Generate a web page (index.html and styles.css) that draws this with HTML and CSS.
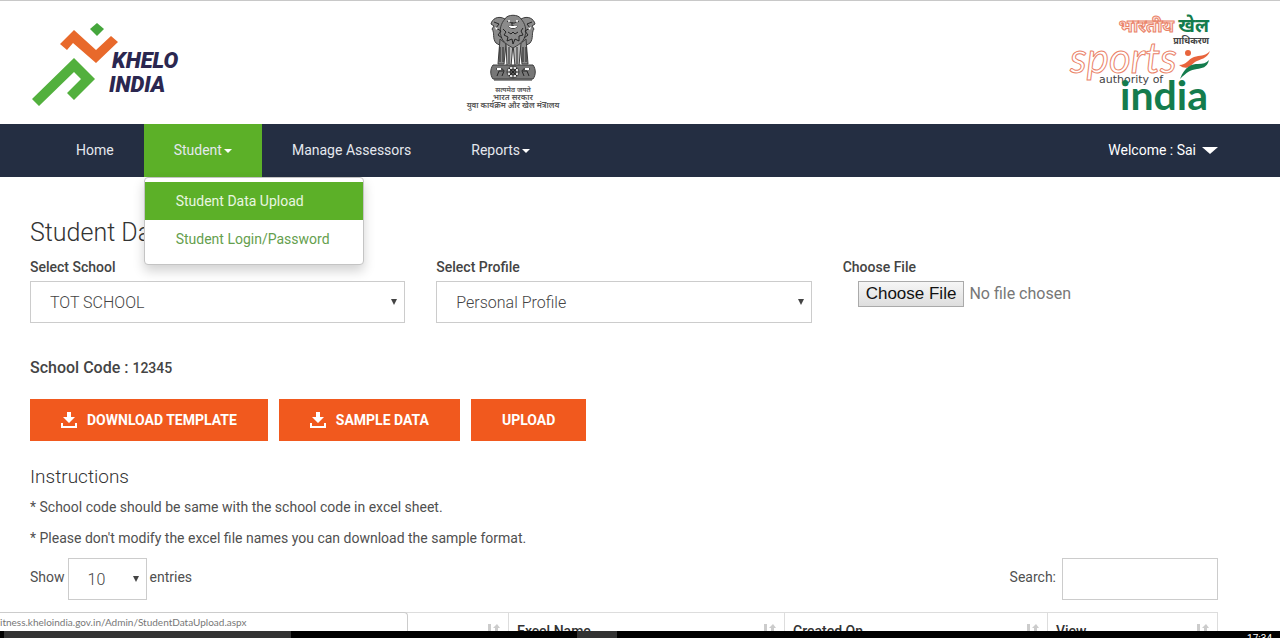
FILE: index.html
```html
<!DOCTYPE html>
<html lang="en">
<head>
  <meta charset="UTF-8">
  <meta name="viewport" content="width=device-width, initial-scale=1.0">
  <title>Student Data Upload</title>
  <link rel="stylesheet" href="styles.css">
</head>
<body>
  <div class="page">
    <header class="header">
      <svg class="logo-khelo" width="152" height="88" viewBox="0 0 152 88" role="img" aria-label="Khelo India">
        <path d="M65 1l7 6-7 7-7-7z" fill="#45a63c"/>
        <path d="M28 22l14-14 22 20 15-14 7 6-22 21-23-20-6 7z" fill="#e8692b"/>
        <path d="M42 36l21 21-21 21-7-7 14-14-7-7L7 84l-7-7z" fill="#52b03d"/>
        <text x="80" y="46" class="khelo-text">KHELO</text>
        <text x="77" y="70" class="khelo-text">INDIA</text>
      </svg>
      <svg class="logo-emblem" width="106" height="98" viewBox="-4 0 106 98" role="img" aria-label="Ministry of Youth Affairs and Sports">
        <g fill="#8b8b8b" stroke="#3c3c3c" stroke-width="1">
          <path d="M39 5c-7-4-13 0-14 5l3 2-2 3c3 4 0 9 4 14l5 3 5-9z"/>
          <path d="M55 5c7-4 13 0 14 5l-3 2 2 3c-3 4 0 9-4 14l-5 3-5-9z"/>
          <path d="M34 25l-2 25h6l2-20zM60 25l2 25h-6l-2-20z"/>
          <path d="M40 29l1 23h4l2-22 2 22h4l2-23z" fill="#b5b5b5"/>
          <path d="M39 5c2-5 14-5 16 0 4 4 6 11 4 17-2 7-7 9-12 12-5-3-10-5-12-12-2-6 0-13 4-17z"/>
          <path d="M27 51h40c3 4 3 10 0 14H27c-3-4-3-10 0-14z" fill="#777"/>
          <circle cx="47" cy="58" r="6" fill="#ddd"/>
          <circle cx="47" cy="58" r="3"/>
        </g>
        <g fill="none" stroke="#242424" stroke-width="1">
          <path d="M41 8c2-2 3 1 5 1h2c2 0 3-3 5-1M42 12c3 3 7 3 10 0M46 8v4l2 0M37 15l3 3-2 3 4 2-1 4 5-2 1 5 2-5 4 2 0-5 4-1-2-4 2-3M42 18l3 2 2-2 2 2 3-2M28 8l5 2-3 4 5 3-3 4 4 3M66 8l-5 2 3 4-5 3 3 4-4 3M34 33v15M37 33v15M43 33v17M51 33v17M57 33v15M60 33v15"/>
          <path d="M30 55c4 0 7-1 8 2l-2 5M31 62l2-5 4 0M64 55c-4 0-7-1-8 2l2 5M63 62l-2-5-4 0M28 66h38M47 52v12M41 58h12M43 54l8 8M51 54l-8 8"/>
        </g>
        <g fill="#fff">
          <circle cx="43" cy="7" r="1"/><circle cx="51" cy="7" r="1"/>
          <path d="M42 12h10l-3 2h-4zM29 13l3 1-2 2zM65 13l-3 1 2 2zM31 54h4v2h-4zM59 54h4v2h-4z"/>
        </g>
        <text x="47" y="78" class="emblem-text emblem-small">सत्यमेव जयते</text>
        <text x="47" y="86" class="emblem-text">भारत सरकार</text>
        <text x="47" y="94" class="emblem-text">युवा कार्यक्रम और खेल मंत्रालय</text>
      </svg>
      <svg class="logo-sai" width="142" height="102" viewBox="0 0 142 102" role="img" aria-label="Sports Authority of India">
        <text x="104" y="21" class="sai-hindi-outline">भारतीय</text>
        <text x="139" y="21" class="sai-hindi">खेल</text>
        <text x="139" y="33" class="sai-hindi-small">प्राधिकरण</text>
        <text x="0" y="62" class="sai-sports">sports</text>
        <text x="29" y="72" class="sai-authority">authority of</text>
        <text x="50" y="99" class="sai-india">india</text>
        <circle cx="118" cy="42" r="3" fill="#e8643c"/>
        <path d="M109 54c8 0 9-6 15-8 6-2 10 0 16-6-3 8-10 8-15 11-5 4-8 9-16 3z" fill="#e8643c"/>
        <path d="M110 68c5-13 12-15 18-15 5 0 8-1 11-4-2 8-7 8-12 9-7 1-10 3-17 10z" fill="#147c4d"/>
      </svg>
    </header>

    <nav class="navbar">
      <ul class="menu">
        <li><a href="#">Home</a></li>
        <li class="active">
          <a href="#">Student<span class="caret"></span></a>
          <ul class="dropdown">
            <li><a href="#" class="selected">Student Data Upload</a></li>
            <li><a href="#">Student Login/Password</a></li>
          </ul>
        </li>
        <li><a href="#">Manage Assessors</a></li>
        <li><a href="#">Reports<span class="caret"></span></a></li>
      </ul>
      <a href="#" class="welcome">Welcome : Sai<span class="caret caret-big"></span></a>
    </nav>

    <main class="content">
      <h1>Student Data Upload</h1>
      <form>
        <div class="fields">
          <div class="field">
            <label for="school">Select School</label>
            <select id="school" class="select">
              <option>TOT SCHOOL</option>
            </select>
          </div>
          <div class="field">
            <label for="profile">Select Profile</label>
            <select id="profile" class="select">
              <option>Personal Profile</option>
            </select>
          </div>
          <div class="field">
            <label for="file">Choose File</label>
            <input type="file" id="file" class="file">
          </div>
        </div>

        <p class="school-code">School Code : <span>12345</span></p>

        <div class="buttons">
          <button type="button" class="btn">
            <svg width="16" height="16" viewBox="0 0 16 16" fill="#fff"><path d="M6 0h4v5h4l-6 6-6-6h4zM0 11h2v3h12v-3h2v5H0z"/></svg>
            DOWNLOAD TEMPLATE
          </button>
          <button type="button" class="btn">
            <svg width="16" height="16" viewBox="0 0 16 16" fill="#fff"><path d="M6 0h4v5h4l-6 6-6-6h4zM0 11h2v3h12v-3h2v5H0z"/></svg>
            SAMPLE DATA
          </button>
          <button type="submit" class="btn">UPLOAD</button>
        </div>
      </form>

      <h2>Instructions</h2>
      <p class="note">* School code should be same with the school code in excel sheet.</p>
      <p class="note">* Please don't modify the excel file names you can download the sample format.</p>

      <div class="table-tools">
        <label class="entries">Show
          <select class="select select-small">
            <option>10</option>
          </select>
          entries
        </label>
        <label class="search">Search: <input type="search"></label>
      </div>

      <table class="uploads">
        <colgroup>
          <col>
          <col class="col-file">
          <col class="col-name">
          <col class="col-date">
          <col class="col-view">
        </colgroup>
        <thead>
          <tr>
            <th></th>
            <th><svg class="sort" width="13" height="12" viewBox="0 0 13 12"><path d="M1 0h3v8h2l-3 4-3-4h1zM8 12V4H6l4-4 3 4h-2v8z"/></svg></th>
            <th>Excel Name<svg class="sort" width="13" height="12" viewBox="0 0 13 12"><path d="M1 0h3v8h2l-3 4-3-4h1zM8 12V4H6l4-4 3 4h-2v8z"/></svg></th>
            <th>Created On<svg class="sort" width="13" height="12" viewBox="0 0 13 12"><path d="M1 0h3v8h2l-3 4-3-4h1zM8 12V4H6l4-4 3 4h-2v8z"/></svg></th>
            <th>View<svg class="sort" width="13" height="12" viewBox="0 0 13 12"><path d="M1 0h3v8h2l-3 4-3-4h1zM8 12V4H6l4-4 3 4h-2v8z"/></svg></th>
          </tr>
        </thead>
      </table>
    </main>
    <div class="status">itness.kheloindia.gov.in/Admin/StudentDataUpload.aspx</div>
  </div>

  <footer class="taskbar">
    <span class="task task-search"></span>
    <span class="task task-app"></span>
    <span class="clock">17:34</span>
  </footer>
</body>
</html>
```

FILE: styles.css
```css
* {
  box-sizing: border-box;
}
body {
  margin: 0;
  height: 100vh;
  display: flex;
  flex-direction: column;
  overflow: hidden;
  font-family: Roboto, Arial, sans-serif;
  font-size: 14px;
  color: #505050;
  background-color: #fff;
}
h1, h2, p, ul {
  margin: 0;
  padding: 0;
}
ul {
  list-style: none;
}
a {
  text-decoration: none;
}
.page {
  position: relative;
  flex: 1;
  min-height: 0;
  overflow: hidden;
}

/* header logos */
.header {
  height: 124px;
  padding: 10px 68px 0 32px;
  border-top: 1px solid #c8c8c8;
  display: grid;
  grid-template-columns: 2fr auto 3fr;
}
.logo-khelo {
  margin-top: 11px;
  overflow: visible;
}
.logo-emblem {
  margin-top: 3px;
  overflow: visible;
}
.logo-sai {
  justify-self: end;
  overflow: visible;
}
.khelo-text {
  font: italic 900 22px Roboto, sans-serif;
  fill: #2b2750;
}
.emblem-text {
  font: 600 8px "Noto Sans", sans-serif;
  text-anchor: middle;
  fill: #555;
}
.emblem-small {
  font-size: 7px;
}
.sai-hindi-outline,
.sai-hindi,
.sai-hindi-small {
  font: 700 19px "Noto Sans", sans-serif;
  text-anchor: end;
  fill: #147c4d;
}
.sai-hindi-outline {
  font-size: 18px;
  fill: #fbe3dc;
  stroke: #ea8268;
  stroke-width: 1;
}
.sai-hindi-small {
  font-size: 9px;
  fill: #444;
}
.sai-sports {
  font: italic 400 42px Lato, sans-serif;
  fill: #fff;
  stroke: #ea8268;
  stroke-width: 1;
}
.sai-authority {
  font: 400 11px "DejaVu Sans", sans-serif;
  fill: #444;
}
.sai-india {
  font: 700 41px Lato, sans-serif;
  fill: #147c4d;
}

/* navigation */
.navbar {
  display: flex;
  justify-content: space-between;
  padding: 0 62px 0 46px;
  background-color: #242e42;
  line-height: 53px;
}
.menu {
  display: flex;
}
.menu > li {
  position: relative;
}
.menu > li > a {
  display: flex;
  align-items: center;
  padding: 0 30px;
  color: #e4e8ee;
}
.menu > .active {
  background-color: #5cb028;
}
.caret {
  margin-left: 2px;
  border-top: 4px solid #fff;
  border-left: 4px solid transparent;
  border-right: 4px solid transparent;
}
.caret-big {
  margin-left: 6px;
  border-top-width: 7px;
  border-left-width: 8px;
  border-right-width: 8px;
}
.welcome {
  display: flex;
  align-items: center;
  color: #fff;
}
.dropdown {
  position: absolute;
  top: 100%;
  left: 0;
  z-index: 10;
  width: 220px;
  padding: 4px 0 6px;
  background-color: #fff;
  border: 1px solid #c4c4c4;
  border-radius: 4px;
  box-shadow: 0 6px 12px rgba(0, 0, 0, 0.18);
  line-height: 38px;
}
.dropdown a {
  display: block;
  padding: 0 31px;
  color: #65a04e;
  white-space: nowrap;
}
.dropdown .selected {
  background-color: #5cb028;
  color: #e9f6e0;
}

/* upload form */
.content {
  padding: 40px 62px 0 30px;
}
h1 {
  margin-bottom: 8px;
  font-size: 25px;
  font-weight: 300;
  line-height: 32px;
  color: #333;
}
.fields {
  display: grid;
  grid-template-columns: repeat(3, 1fr);
  gap: 31px;
}
.field label {
  display: block;
  margin-bottom: 4px;
  font-weight: 500;
  line-height: 20px;
  color: #444;
}
.select {
  display: block;
  width: 100%;
  height: 42px;
  padding: 0 19px;
  border: 1px solid #ccc;
  border-radius: 0;
  appearance: none;
  background: #fff url("data:image/svg+xml,%3Csvg xmlns='http://www.w3.org/2000/svg' width='6' height='6'%3E%3Cpath d='M0 0h6L3 6z' fill='%23444'/%3E%3C/svg%3E") no-repeat right 7px center;
  font-family: inherit;
  font-size: 16px;
  font-weight: 300;
  color: #444;
}
.file {
  width: 100%;
  padding-left: 15px;
  font-family: inherit;
  font-size: 16px;
  color: #777;
}
.file::file-selector-button {
  height: 26px;
  margin-right: 5px;
  padding: 0 7px;
  border: 1px solid #aaa;
  border-radius: 0;
  background: linear-gradient(#f6f6f6, #dedede);
  font-family: "Liberation Sans", Arial, sans-serif;
  font-size: 17px;
  font-weight: 400;
  color: #111;
}
.school-code {
  margin-top: 34px;
  font-size: 16px;
  font-weight: 500;
  line-height: 22px;
  color: #444;
}
.school-code span {
  font-size: 14px;
}
.buttons {
  display: flex;
  gap: 11px;
  margin-top: 20px;
}
.btn {
  display: flex;
  align-items: center;
  gap: 10px;
  height: 42px;
  padding: 0 31px;
  border: none;
  background-color: #f1591e;
  color: #fff;
  font-family: inherit;
  font-size: 14px;
  font-weight: 700;
  cursor: pointer;
}

/* instructions */
h2 {
  margin: 23px 0 7px;
  font-size: 19px;
  font-weight: 300;
  line-height: 26px;
  color: #333;
}
.note {
  margin-bottom: 11px;
  line-height: 20px;
}

/* uploads table */
.table-tools {
  display: flex;
  justify-content: space-between;
  margin-top: -1px;
  line-height: 38px;
}
.entries,
.search {
  display: flex;
  gap: 3px;
}
.select-small {
  width: 79px;
}
.search {
  gap: 6px;
}
.search input {
  width: 156px;
  height: 42px;
  border: 1px solid #ccc;
}
.uploads {
  width: 100%;
  margin-top: 12px;
  border-collapse: collapse;
  table-layout: fixed;
}
.uploads th {
  height: 40px;
  padding: 7px 8px;
  border: 1px solid #ddd;
  text-align: left;
  vertical-align: top;
  font-weight: 500;
  line-height: 22px;
  color: #333;
}
.col-file {
  width: 290px;
}
.col-name {
  width: 276px;
}
.col-date {
  width: 263px;
}
.col-view {
  width: 170px;
}
.sort {
  float: right;
  margin-top: 4px;
  fill: #ccc;
}

/* browser link preview and desktop taskbar */
.status {
  position: absolute;
  left: 0;
  bottom: 0;
  width: 408px;
  border: 1px solid #ccc;
  border-width: 1px 1px 0 0;
  border-top-right-radius: 4px;
  background-color: #fff;
  font-family: Lato, sans-serif;
  font-size: 10px;
  line-height: 18px;
  color: #777;
}
.taskbar {
  display: flex;
  height: 7px;
  padding: 0 8px 0 4px;
  overflow: hidden;
  background-color: #000;
}
.task {
  background-color: #333;
}
.task-search {
  width: 287px;
}
.task-app {
  width: 40px;
  margin-left: 286px;
}
.clock {
  margin-left: auto;
  padding-top: 2px;
  font-size: 10px;
  line-height: 12px;
  color: #fff;
}
```
